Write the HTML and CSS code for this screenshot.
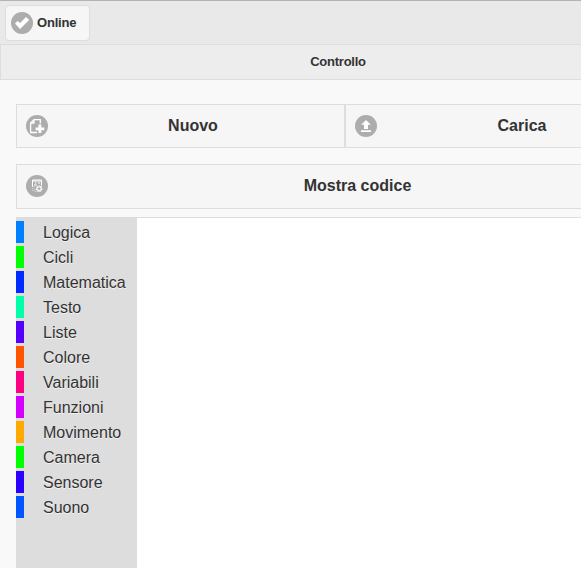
FILE: index.html
```html
<!DOCTYPE html>
<html lang="it">
<head>
<meta charset="utf-8">
<title>Controllo</title>
<link rel="stylesheet" href="styles.css">
</head>
<body>
<header class="header">
  <a class="status">
    <svg class="icon" viewBox="0 0 22 22"><circle cx="11" cy="11" r="11"/><path class="glyph" d="M4 11.6 6.7 8.9 9 11.1 15 5 18.2 8 9 17Z"/></svg>
    <span>Online</span>
  </a>
</header>
<nav class="navbar"><span>Controllo</span></nav>
<main class="content">
  <div class="row">
    <a class="button">
      <svg class="icon" viewBox="0 0 22 22"><circle cx="11" cy="11" r="11"/><path class="line" d="M11 17.5H4.6V8L8 4.7H14.3V8.5M8 5V8H5"/><path class="glyph" d="M12.5 9.5H15.3V12.4H18.3V15.2H15.3V18H12.5V15.2H9.6V12.4H12.5Z"/></svg>
      <span>Nuovo</span>
    </a>
    <a class="button">
      <svg class="icon" viewBox="0 0 22 22"><circle cx="11" cy="11" r="11"/><path class="glyph" d="M11 5 15.8 9.7H13V14H9V9.7H6.2ZM6 15.2H16V17H6Z"/></svg>
      <span>Carica</span>
    </a>
  </div>
  <div class="row row-code">
    <a class="button">
      <svg class="icon" viewBox="0 0 22 22"><circle cx="11" cy="11" r="11"/><path class="thin" d="M6.5 12V5H15.5V10.5M6.5 6H15.5M9 8H10.5M12 8H14M8 10H11"/><path class="dots" d="M6.7 11V17M8.3 11V17M9.8 14V17"/><circle class="gear" cx="13.2" cy="13.7" r="2.2"/></svg>
      <span>Mostra codice</span>
    </a>
  </div>
  <div class="workspace">
    <ul class="toolbox">
      <li class="blue">Logica</li>
      <li class="green">Cicli</li>
      <li class="royal">Matematica</li>
      <li class="mint">Testo</li>
      <li class="violet">Liste</li>
      <li class="orange">Colore</li>
      <li class="pink">Variabili</li>
      <li class="magenta">Funzioni</li>
      <li class="amber">Movimento</li>
      <li class="green">Camera</li>
      <li class="indigo">Sensore</li>
      <li class="azure">Suono</li>
    </ul>
  </div>
</main>
</body>
</html>
```
FILE: styles.css
```css
* { box-sizing: border-box; }
html, body { height: 100%; margin: 0; overflow: hidden; }
body {
  background: #f9f9f9;
  color: #333;
  font: 16px/21px "Liberation Sans", Arial, sans-serif;
  text-shadow: 0 1px 0 #f3f3f3;
}
.header {
  height: 44px;
  padding: 4px 5px;
  border-top: 1px solid #b3b3b3;
  background: #e9e9e9;
}
.status {
  display: flex;
  align-items: center;
  gap: 4px;
  width: 85px;
  height: 36px;
  padding-left: 5px;
  border: 1px solid #ddd;
  border-radius: 4px;
  background: #f6f6f6;
  font-size: 13px;
  font-weight: bold;
  letter-spacing: -.2px;
}
.status span { padding-bottom: 2px; }
.icon { display: block; flex: none; width: 22px; height: 22px; fill: #adadad; }
.glyph { fill: #fff; }
.line { fill: none; stroke: #fff; stroke-width: 1.3; }
.thin { fill: none; stroke: #fff; stroke-width: 1; }
.dots { fill: none; stroke: #e4e4e4; stroke-width: .8; stroke-dasharray: 1 1; }
.gear { fill: none; stroke: #fff; stroke-width: 2; stroke-dasharray: 1.3 .4; }
.navbar {
  width: 676px;
  height: 36px;
  border: 1px solid #ddd;
  background: #ededed;
  font-size: 13px;
  line-height: 34px;
  text-align: center;
  font-weight: bold;
  letter-spacing: -.25px;
}
.content { width: 690px; padding: 24px 16px 0; }
.row { display: flex; height: 44px; }
.row-code { height: 45px; margin-top: 16px; }
.row-code .button { padding-bottom: 1px; }
.button {
  display: flex;
  flex: 1;
  align-items: center;
  padding: 0 15px 0 9px;
  border: 1px solid #ddd;
  background: #f6f6f6;
  font-weight: bold;
}
.button span { flex: 1; padding-left: 9px; text-align: center; line-height: 19px; margin-top: -1px; }
.workspace { height: 400px; margin-top: 8px; border-top: 1px solid #ddd; background: #fff; }
.toolbox {
  width: 121px;
  height: 100%;
  margin: 0;
  padding: 3px 0 0;
  list-style: none;
  background: #ddd;
}
.toolbox li {
  height: 22px;
  margin-bottom: 3px;
  padding-left: 19px;
  border-left: 8px solid var(--category);
  line-height: 24px;
}
.blue { --category: #0080ff; }
.green { --category: #00ff00; }
.royal { --category: #002bff; }
.mint { --category: #00ffaa; }
.violet { --category: #5500ff; }
.orange { --category: #ff5500; }
.pink { --category: #ff0080; }
.magenta { --category: #d400ff; }
.amber { --category: #ffaa00; }
.indigo { --category: #2b00ff; }
.azure { --category: #0055ff; }
```
